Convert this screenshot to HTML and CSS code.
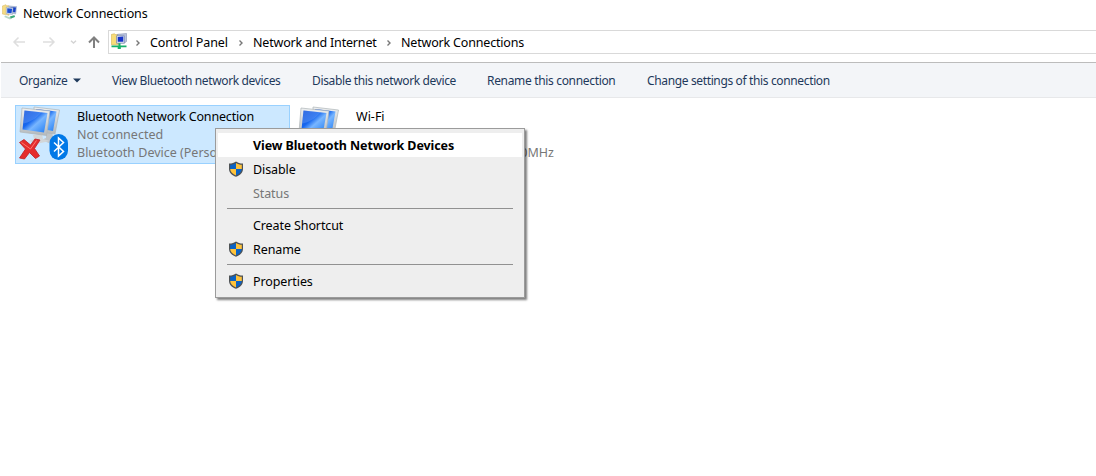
FILE: index.html
```html
<!DOCTYPE html>
<html lang="en">
<head>
<meta charset="utf-8">
<title>Network Connections</title>
<link rel="stylesheet" href="styles.css">
</head>
<body>
<svg class="defs" aria-hidden="true">
  <defs>
    <linearGradient id="screen" x1="0" y1="0" x2="1" y2="1">
      <stop offset="0" stop-color="#0a4fdc"/><stop offset=".4" stop-color="#1767ee"/><stop offset=".58" stop-color="#78b6ff"/><stop offset="1" stop-color="#1e7af2"/>
    </linearGradient>
    <linearGradient id="bezel" x1="0" y1="0" x2="0" y2="1">
      <stop offset="0" stop-color="#eef0f1"/><stop offset="1" stop-color="#b4b9bc"/>
    </linearGradient>
    <symbol id="monitors" viewBox="0 0 44 40">
      <path d="M27 26l6-1 1 6 8 2-12 4-8-3 5-2z" fill="#bfc4c7"/>
      <path d="M14 29l9-1 1 5 7 2-14 3-7-3 5-2z" fill="#d2d6d8"/>
      <path d="M15 1L40.500 4 36 28 15 25z" fill="url(#bezel)" stroke="#aeb4b8" stroke-width=".7"/>
      <path d="M17 3L37.500 5.500 34 25 17 22z" fill="url(#screen)"/>
      <path d="M3 2L31 5 27.500 29.500 1 26z" fill="url(#bezel)" stroke="#aeb4b8" stroke-width=".7"/>
      <path d="M5.500 4.500L28.500 7 25 26.500 3.500 23.500z" fill="url(#screen)"/>
      <path d="M5.500 4.500l17 1.800C18 12 10 17 4.300 17.500z" fill="#fff" opacity=".16"/>
    </symbol>
    <symbol id="shield" viewBox="0 0 16 16">
      <path d="M8 .5C6.300 1.700 4 2.500 1 2.600V8c0 3.800 3 6.200 7 7.800C12 14.200 15 11.800 15 8V2.600C12 2.500 9.700 1.700 8 .5z" fill="#4e5255"/>
      <path d="M8 1.900C6.300 3 4.400 3.600 2.200 3.700V8H8z" fill="#0b63c5"/>
      <path d="M8 1.900c1.700 1.100 3.600 1.700 5.800 1.800V8H8z" fill="#ffc33b"/>
      <path d="M2.200 8H8v6.400C4.600 13 2.200 11 2.200 8z" fill="#ffc33b"/>
      <path d="M13.800 8H8v6.400c3.400-1.400 5.800-3.400 5.800-6.400z" fill="#0b63c5"/>
    </symbol>
    <symbol id="folder-net" viewBox="0 0 16 16">
      <path d="M.3 1.500L3.500.7l.8.9h3.200v10.200H.3z" fill="#f8dd78" stroke="#c7a448" stroke-width=".5"/>
      <path d="M6.500 1.300L15.500.5v8l-2 1.500h-7z" fill="#b9c4df" stroke="#7683a5" stroke-width=".5"/>
      <path d="M5.500 2.800h7.800v7.400H5.500z" fill="#e5eaf4" stroke="#65749a" stroke-width=".6"/>
      <path d="M6.700 3.900l5.600-.3v5.200H6.700z" fill="#1633ca"/>
      <path d="M7.500 10.200h2v2.300h6v1.700H9.800V16H6.700v-1.800H.5v-1.700h7z" fill="#17b169"/>
    </symbol>
    <symbol id="title-net" viewBox="0 0 16 16">
      <path d="M.3 2L4 .7l.8 1H7v9.600L.3 10z" fill="#f6dc82" stroke="#d2b564" stroke-width=".5"/>
      <path d="M6.500 1.500l8.500.8-1 8-6-.6z" fill="#aebbd5"/>
      <path d="M8.500 3l5.500.5-.7 4.800-4.800-.5z" fill="#1641c7"/>
      <path d="M4.300 3l6.800.7-.7 6.800-6.200-.8z" fill="#dbe3ee" stroke="#8494b0" stroke-width=".5"/>
      <path d="M5.300 4.200l4.800.5-.6 4.600-4.300-.5z" fill="#1b4ed2"/>
      <path d="M3 11.500l4 1.400 4.500-1.700 1.500 1-5 3.300-5.700-2.500z" fill="#b9d8c8"/>
      <path d="M8 12.500l4.500-1.300.5 1.700-4.200 1.600z" fill="#39a978"/>
    </symbol>
  </defs>
</svg>
<div class="window">
  <header class="titlebar"><svg class="icon16"><use href="#title-net"/></svg><span class="title">Network Connections</span></header>
  <nav class="navigation">
    <div class="arrows">
      <svg width="108" height="24" viewBox="0 0 108 24" fill="none">
        <path d="M25 12H14M18.500 7.500L14 12l4.500 4.500M43 12h11M49.500 7.500L54 12l-4.500 4.500" stroke="#dedede" stroke-width="1.500"/>
        <path d="M71 10.700l2.500 2.300 2.500-2.300" stroke="#d4d4d4" stroke-width="1.400"/>
        <path d="M94 18V7.500M89 12.500l5-5 5 5" stroke="#808080" stroke-width="2"/>
      </svg>
    </div>
    <div class="address">
      <svg class="icon16 location"><use href="#folder-net"/></svg>
      <svg class="chevron" viewBox="0 0 6 8"><path d="M1.500 1.500L4 4 1.500 6.500"/></svg><span class="crumb control">Control Panel</span>
      <svg class="chevron" viewBox="0 0 6 8"><path d="M1.500 1.500L4 4 1.500 6.500"/></svg><span class="crumb internet">Network and Internet</span>
      <svg class="chevron" viewBox="0 0 6 8"><path d="M1.500 1.500L4 4 1.500 6.500"/></svg><span class="crumb">Network Connections</span>
    </div>
  </nav>
  <div class="toolbar">
    <span class="organize">Organize<svg width="8" height="5"><path d="M0 .5h8L4 4.500z" fill="#1e395b"/></svg></span>
    <span class="view">View Bluetooth network devices</span>
    <span class="disable">Disable this network device</span>
    <span class="rename">Rename this connection</span>
    <span>Change settings of this connection</span>
  </div>
  <main class="connections">
    <section class="tile selected">
      <div class="picture">
        <svg class="monitor"><use href="#monitors"/></svg>
        <svg class="status" viewBox="0 0 52 30">
          <path d="M3.500 9.500l4.500-3 6.500 5.500 4.500-6 5 1-5.500 8.500 5 7.500-4 2.500-6-6-5 6.500-5-1 6-9z" fill="#e52c2c" stroke="#bd2024" stroke-width=".8"/>
          <path d="M5.500 9.500l9 6.500 6-8.500" fill="none" stroke="#ff7770" stroke-width="1"/>
          <rect x="33.500" y="1" width="18.500" height="26" rx="9.200" fill="#0078e7"/>
          <path d="M38 9.500l9.500 9-5 4.500V5l5 4.500-9.500 9" fill="none" stroke="#fff" stroke-width="1.500"/>
        </svg>
      </div>
      <div class="details"><b>Bluetooth Network Connection</b><span>Not connected</span><span>Bluetooth Device (Personal Area ...</span></div>
    </section>
    <section class="tile wifi">
      <div class="picture"><svg class="monitor"><use href="#monitors"/></svg></div>
      <div class="details"><b>Wi-Fi</b><span></span><span class="adapter">160MHz</span></div>
    </section>
  </main>
</div>
<div class="menu">
  <div class="item primary"><i></i><span>View Bluetooth Network Devices</span></div>
  <div class="item"><i><svg><use href="#shield"/></svg></i><span>Disable</span></div>
  <div class="item muted"><i></i><span>Status</span></div>
  <hr>
  <div class="item"><i></i><span>Create Shortcut</span></div>
  <div class="item"><i><svg><use href="#shield"/></svg></i><span>Rename</span></div>
  <hr>
  <div class="item"><i><svg><use href="#shield"/></svg></i><span>Properties</span></div>
</div>
</body>
</html>
```
FILE: styles.css
```css
* { box-sizing: border-box; }
body { margin: 0; width: 1096px; height: 476px; overflow: hidden; background: #fff; color: #000; font: 12.5px/18px "Noto Sans", "Open Sans", sans-serif; letter-spacing: -.1px; white-space: nowrap; }
.defs { position: absolute; width: 0; height: 0; }
svg { display: block; flex-shrink: 0; }
.icon16 { width: 16px; height: 16px; }
.titlebar { display: flex; height: 30px; padding: 4px 0 0 2px; }
.title { margin-left: 5px; padding-top: 1px; }
.navigation { display: flex; height: 33px; margin-left: 1px; border-bottom: 1px solid #bcbcbc; }
.arrows { width: 107px; margin-left: -1px; }
.address { display: flex; align-items: center; flex: 1; height: 24px; margin-left: 1px; padding-left: 2px; border: 1px solid #d9d9d9; border-right: 0; letter-spacing: -.18px; }
.location { margin-top: -2px; }
.chevron { width: 6px; height: 8px; margin: 1px 9px 0 8px; fill: none; stroke: #777; stroke-width: 1.400; }
.crumb { padding-top: 1px; }
.control { width: 80px; letter-spacing: -.1px; }
.internet { width: 125px; }
.toolbar { display: flex; align-items: center; height: 35px; margin-left: 1px; padding: 1px 0 0 18px; background: #f3f5f8; border-bottom: 1px solid #e7e8ea; color: #1e395b; font-size: 12px; letter-spacing: -.36px; }
.organize { display: flex; align-items: center; gap: 6px; width: 93px; }
.view { width: 200px; }
.disable { width: 175px; }
.rename { width: 160px; letter-spacing: -.33px; }
.connections { display: flex; gap: 4px; padding: 7px 0 0 15px; }
.tile { display: flex; width: 275px; height: 59px; border: 1px solid transparent; }
.selected { background: #cce8ff; border-color: #99d1ff; }
.picture { position: relative; width: 61px; }
.monitor { width: 44px; height: 40px; margin-left: 3px; }
.status { position: absolute; left: 0; top: 27px; width: 52px; height: 30px; }
.details { display: flex; flex-direction: column; padding-top: 2px; letter-spacing: 0; }
.details b { font-weight: 400; letter-spacing: -.17px; }
.details span { height: 18px; color: #777; }
.details .adapter { padding-left: 150px; }
.wifi b { letter-spacing: 0; }
.menu { position: absolute; left: 215px; top: 128px; width: 310px; height: 170px; padding: 4px 2px; background: #eee; border: 1px solid #9b9b9b; box-shadow: 2px 2px 2px rgba(0,0,0,.5); }
.item { display: flex; align-items: center; height: 24px; }
.item i { display: flex; width: 35px; padding-left: 10px; }
.item svg { width: 16px; height: 16px; margin-top: -1px; }
.item span { padding-top: 2px; }
.primary { background: #fff; font-weight: 700; }
.muted { color: #777; }
.menu hr { height: 1px; margin: 3px 9px 4px; border: 0; background: #919191; }
```
